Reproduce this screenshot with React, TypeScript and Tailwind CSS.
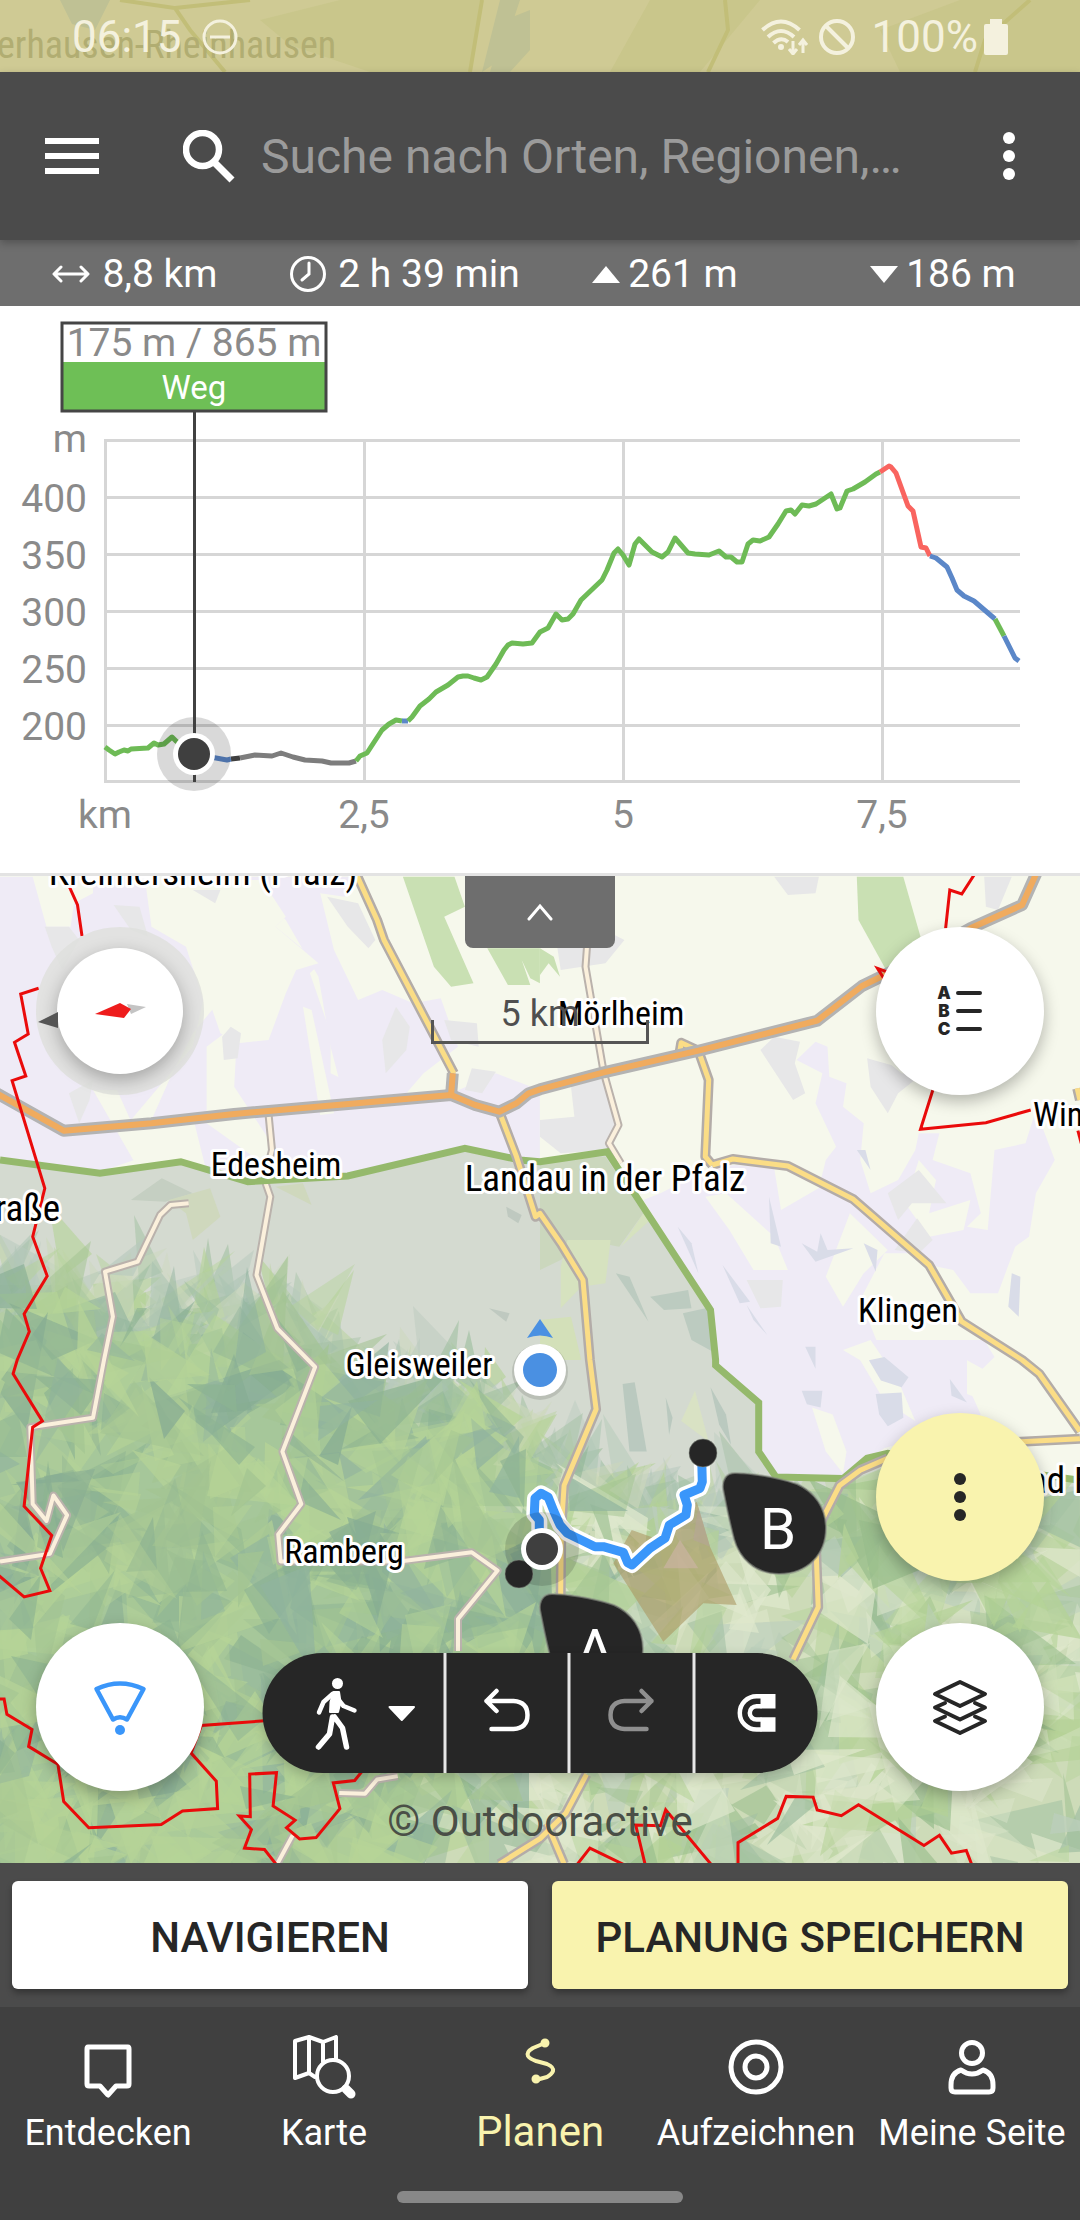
import React from "react";

/* ---------- Map geometry ---------- */

const sheet = (ox: number, oy: number, kx: number, ky: number) => (pts: string) =>
  pts
    .trim()
    .split(/\s+/)
    .map((p) => {
      const [x, y] = p.split(",").map(Number);
      return `${(ox + x / kx).toFixed(1)},${(oy + y / ky).toFixed(1)}`;
    })
    .join(" ");

const NW = sheet(0, 860, 2.904, 3);
const NE = sheet(540, 860, 2.904, 3);
const SW = sheet(0, 1340, 2.904, 2.958);
const SE = sheet(540, 1340, 2.904, 2.958);
const DETAIL = sheet(480, 1440, 3, 3);

const lavender = [
  NW("0,50 95,50 135,200 205,200 215,130 270,100 270,50 420,50 450,170 560,110 700,60 760,50 830,170 800,200 930,310 900,340 960,520 960,640 1060,690 1000,760 560,770 560,600 680,620 700,550 780,540 840,440 880,440 950,720 1310,700 1400,660 1440,640 1568,690 1568,905 1350,865 1010,948 720,965 600,935 560,770 500,780 400,790 340,780 390,900 290,935 0,895"),
  NW("700,50 1040,50 1000,110 930,100 970,270 1040,420 1110,390 1200,430 1280,415 1330,560 1230,640 1180,700 1000,720 960,560 925,350 830,180"),
  NE("745,600 800,545 835,560 840,650 890,670 880,740 940,790 930,900 960,1000 1040,960 1090,870 1100,820 1160,820 1140,900 1250,940 1280,1060 1240,1100 1300,1110 1320,870 1410,850 1440,750 1495,900 1440,1000 1420,1130 1380,1160 1330,1300 1250,1300 1200,1230 1130,1215 900,1020 830,1100 770,1150 830,900 860,860 800,730 820,640"),
  NE("350,1000 500,920 570,915 680,925 700,1050 850,960 920,1030 1080,1180 1000,1180 930,1320 1000,1500 510,1500 495,1340 300,1020"),
  SE("500,0 1290,0 1320,50 1240,130 1280,220 1190,260 1000,320 880,400 690,400 640,330 640,180 515,70"),
];

const sand = [
  NW("420,50 640,50 600,200 690,260 640,420 560,520 500,640 440,780 380,780 560,560 590,420 540,260 440,200"),
  NW("640,60 760,60 830,170 800,200 925,310 860,330 830,400 780,540 690,550 640,520 600,400 560,260"),
  NW("270,690 340,690 430,900 390,905"),
  NW("600,560 690,490 680,680 820,900 790,930 600,790"),
  NW("880,440 905,450 970,760 930,765"),
  NE("540,1000 680,1130 720,1230 620,1230 550,1110 480,1010"),
  NE("900,1060 1010,1170 940,1240 880,1340 830,1250"),
  NE("1100,900 1150,960 1130,1060 1250,1020 1230,1110 1130,1130 1060,1030"),
  SE("880,30 960,0 1040,120 1090,240 1000,180 930,60"),
  SE("790,200 850,220 890,330 880,395 830,330"),
  SE("1240,60 1330,110 1340,200 1240,160"),
];

const builtUp = [
  NW("130,200 200,200 230,240 180,330 150,260"),
  NW("330,135 405,140 430,230 380,210"),
  NW("950,110 1040,130 1090,240 1070,265 1010,200"),
  NW("670,500 700,520 690,595 650,600 645,530"),
  NW("1150,440 1190,500 1180,570 1120,640 1110,540"),
  NW("1290,480 1385,490 1390,560 1310,540"),
  NW("1370,625 1440,635 1400,700 1350,690"),
  NW("200,700 270,660 260,720 230,790"),
  NW("560,90 640,90 625,130"),
  NE("50,260 140,265 170,200 245,240 190,310 60,330"),
  NE("90,680 190,640 230,800 200,870 60,880 0,830 0,780 100,770"),
  NE("640,570 680,530 755,545 740,610 770,700 735,720"),
  NE("950,595 1020,615 1050,640 1100,650 1040,700 1010,760 960,680"),
  NE("680,50 810,50 800,100 720,105"),
  NE("1290,50 1370,50 1330,150 1295,140"),
  NE("1010,1000 1100,930 1180,1030 1080,1030 1040,1080"),
  NE("1095,1075 1140,1140 1100,1180 1030,1170"),
  NE("600,1260 705,1260 700,1340 640,1345"),
];

const meadow = [
  NW("1170,50 1320,50 1350,140 1290,170 1375,370 1310,380 1260,320"),
  NW("1415,265 1568,265 1568,370 1540,355 1515,300 1540,375 1475,375"),
  NE("0,265 40,290 58,350 25,310 0,345"),
  NE("920,50 1055,50 1105,230 1050,340 1005,330 925,180"),
];

const slate = [
  NE("530,1215 610,1325 580,1330"),
  NE("600,1335 660,1425 620,1380"),
  NE("665,1010 700,1160 670,1150"),
  NE("760,1150 805,1175 815,1120 835,1170 910,1165 800,1205"),
  NE("940,1150 980,1170 975,1235"),
  NE("1370,1240 1395,1250 1390,1370 1360,1340"),
  NE("920,870 945,870 960,930"),
  NE("400,1100 440,1150 460,1240"),
  SE("955,60 1000,50 1070,110 1050,140 990,120"),
  SE("975,160 1050,155 1055,230 1010,255 985,220"),
  SE("1190,115 1240,185 1195,165"),
  SE("770,20 800,20 800,85"),
  SE("760,150 820,150 815,200 775,190"),
];

const parkArea =
  NW("0,900 290,940 525,905 720,965 1010,948 1350,865 1510,900 1568,905") +
  " " +
  NE("0,905 195,875 495,1350 510,1500") +
  " " +
  SE("510,75 635,185 635,330 685,405 880,410 950,350 1010,335 1568,415") +
  " 1080,1863 0,1863";

const parkBorder =
  NW("0,900 290,940 525,905 720,965 1010,948 1350,865 1510,900 1568,905") +
  " " +
  NE("0,905 195,875 495,1350 510,1500") +
  " " +
  SE("510,75 635,185 635,330 685,405 880,410 950,350 1010,335 1568,415");

const parkPatches = [
  { pts: NE("0,900 190,890 300,1060 230,1160 130,1140 60,1200 0,1230"), fill: "#cbd7bd" },
  { pts: NE("80,1140 205,1140 190,1270 120,1280 60,1345 60,1220"), fill: "#d6e2bf" },
  { pts: NE("235,1160 300,1060 320,1080"), fill: "#d6e2bf" },
  { pts: NE("0,1380 90,1370 120,1500 0,1500"), fill: "#d3e0b9" },
  { pts: NE("220,1240 260,1250 315,1385"), fill: "#bccbc0" },
  { pts: NE("320,1310 430,1290 440,1345 360,1350"), fill: "#bccbc0" },
  { pts: NE("415,1360 500,1340 510,1480 440,1440"), fill: "#bccbc0" },
  { pts: NW("380,1020 470,955 560,1000 480,1025"), fill: "#c5cfc2" },
  { pts: NW("490,1020 610,985 640,1070 560,1140 540,1060"), fill: "#cfd8bd" },
  { pts: NW("800,980 880,970 905,1035"), fill: "#cfd8bd" },
  { pts: NW("1470,1040 1515,1065 1505,1090 1475,1070"), fill: "#bfc9c0" },
  { pts: NW("1420,1345 1480,1360 1470,1385"), fill: "#bfc9c0" },
  { pts: SE("240,130 275,125 310,330 260,330"), fill: "#bac9bf" },
  { pts: SE("365,170 385,230 375,280"), fill: "#bac9bf" },
  { pts: SE("410,240 450,150 490,300"), fill: "#d9e2c4" },
  { pts: SE("495,140 540,220 555,310 520,250"), fill: "#bac9bf" },
];

const forestEdge = [
  [0, 1285], [60, 1285], [110, 1315], [170, 1305], [240, 1325], [300, 1325], [350, 1375],
  [400, 1385], [450, 1390], [500, 1415], [535, 1460], [590, 1485], [650, 1505], [710, 1515],
  [760, 1495], [830, 1488], [900, 1475], [960, 1490], [1080, 1500],
];
const forestArea = forestEdge.map((p) => p.join(",")).join(" ") + " 1080,1863 0,1863";

// Height of the woodland's northern edge at a given easting.
const edgeAt = (x: number) => {
  for (let i = 1; i < forestEdge.length; i++) {
    const [x0, y0] = forestEdge[i - 1];
    const [x1, y1] = forestEdge[i];
    if (x <= x1) return y0 + ((y1 - y0) * (x - x0)) / (x1 - x0);
  }
  return 1500;
};

type Shard = { pts: string; fill: string; o: number };

// Woodland texture: overlapping triangular shards from a fixed seed.
const { hillside, fringe } = (() => {
  let seed = 20240615;
  const rnd = () => {
    seed = (seed * 1664525 + 1013904223) % 4294967296;
    return seed / 4294967296;
  };
  const triangle = (x: number, y: number, r: number, a: number) =>
    [0, 1.5 + rnd() * 1.2, 3.2 + rnd() * 1.4]
      .map((t, k) => {
        const len = r * (k === 0 ? 1.4 : 0.3 + rnd() * 0.6);
        return `${(x + Math.cos(a + t) * len).toFixed(0)},${(y + Math.sin(a + t) * len).toFixed(0)}`;
      })
      .join(" ");
  const west = ["#b6d497", "#b6d497", "#b6d497", "#8db392", "#90b39e", "#a3c492", "#86ac93"];
  const east = ["#dfe8cd", "#dfe8cd", "#dfe8cd", "#b4d296", "#b4d296", "#a0bfa2", "#bccfbc", "#98bd8c"];
  const hillside: Shard[] = [];
  for (let i = 0; i < 1250; i++) {
    const x = rnd() * 1100 - 10;
    const y = 1280 + rnd() * 600;
    if (y < edgeAt(x) + 6) continue;
    const colors = x + (y - 1500) * 0.4 > 540 + rnd() * 140 ? east : west;
    hillside.push({
      pts: triangle(x, y, 22 + rnd() * 42, rnd() * Math.PI * 2),
      fill: colors[Math.floor(rnd() * colors.length)],
      o: 0.35 + rnd() * 0.4,
    });
  }
  // Thin tree cover fades out towards the plain.
  const fringe: Shard[] = [];
  const pale = ["#a9c3b0", "#b7c9bd", "#b4d296", "#9fbfa0", "#ccd8bb"];
  for (let i = 0; i < 300; i++) {
    const x = rnd() * 760;
    const y = edgeAt(x) + 25 - rnd() * rnd() * 75;
    fringe.push({
      pts: triangle(x, y, 16 + rnd() * 30, -2.3 + rnd() * 2),
      fill: pale[Math.floor(rnd() * pale.length)],
      o: 0.35 + rnd() * 0.3,
    });
  }
  return { hillside, fringe };
})();

const lightRoads = [
  NW("780,765 790,870 768,960 785,1010 745,1245 805,1405 895,1500") + " " + SW("915,80 820,330 875,485 808,575 815,655 1160,655 1370,628 1445,682 1330,825 1330,920"),
  NW("548,1030 495,1035 465,1065 400,1205 305,1235 328,1370 302,1500") + " " + SW("270,230 88,258 95,485 135,535 155,460 195,518 145,632 0,655"),
  NE("138,50 138,240 132,320 185,637 228,795 200,850 235,910"),
  SW("985,1340 1060,1342 1095,1300 1155,1290"),
  SW("850,1465 805,1550"),
];

const yellowRoads = [
  NW("1025,20 1095,180 1115,240 1318,640"),
  NW("1450,755 1500,890 1555,1070") + " " + NE("0,1060 60,1150 125,1260 145,1500") + " " + SE("163,205 70,430 62,560 60,750 90,900"),
  NE("405,580 410,548 460,572 490,660 480,890 500,915"),
  NE("500,915 560,897 720,918 910,1018 1130,1215 1225,1385 1400,1500") + " " + SE("1450,100 1568,270"),
  SE("1380,302 1568,292"),
  SE("1010,350 930,385 870,430 800,570 808,790 735,945"),
  SE("135,1285 75,1400 0,1475") + " " + SW("1450,1550"),
  SE("20,1430 70,1550"),
  NE("1560,685 1568,720"),
];

const orangeRoads = [
  NW("-10,700 185,812 440,790 680,762 1310,705 1380,735 1450,755 1500,730 1535,700") + " " + NE("0,688 185,637 460,572 805,482 935,378 1030,330 1250,205 1400,135 1450,20"),
  NW("1315,640 1310,705"),
];

const redBorders = [
  NW("175,20 225,135 238,228"),
  NW("112,385 60,402 82,522 42,547 75,648 35,662 130,985 95,1130 137,1248 70,1362 85,1415 50,1500") + " " + SW("38,100 123,240 95,258 70,492 150,578 118,675 145,742 70,760 -5,695"),
  SW("-5,1062 12,1062 20,1107 93,1152 83,1202 168,1255 185,1365 258,1443 468,1433 530,1393 632,1386 628,1305 555,1222 585,1140 800,1124"),
  SW("1060,1265 1030,1303 968,1310 987,1386 918,1472 870,1476 832,1443 857,1420 793,1378 803,1280 725,1284 727,1410 695,1408 730,1448 710,1503 768,1507 805,1555"),
  SE("105,1555 145,1503 250,1555"),
  SE("306,1555 278,1435 350,1437 365,1390 500,1555"),
  SE("575,1555 575,1487 690,1415 715,1350 793,1352 805,1390 875,1407 925,1375 1115,1495 1160,1465 1195,1518 1238,1510 1255,1555"),
  NE("1270,30 1225,102 1190,90 1178,205"),
  NE("1020,340 980,325 998,355"),
  NE("1150,660 1105,808 1295,788 1425,750"),
  NE("1562,812 1572,850"),
];

const route = DETAIL(
  "178,300 178,240 163,222 165,175 183,160 205,172 222,215 240,255 262,280 345,320 370,320 430,337 443,368 456,375 510,325 555,295 568,255 618,225 622,195 612,165 660,145 667,125 665,60",
);

const towns = [
  { name: "Kreimersheim (Pfalz)", x: 203, y: 885 },
  { name: "Landau in der Pfalz", x: 605, y: 1191 },
];
const villages = [
  { name: "Mörlheim", x: 621, y: 1025 },
  { name: "Edesheim", x: 276, y: 1176 },
  { name: "Klingen", x: 908, y: 1322 },
  { name: "Gleisweiler", x: 419, y: 1376 },
  { name: "Ramberg", x: 344, y: 1563 },
];

const PIN =
  "M12 0C24 0 51 3 74 11C92 19 103 35 103 55C103 81 85 101 56 101C31 101 16 84 11 66C6 47 3 31 0 16C-1 7 3 0 12 0Z";

function Pin({ x, y, letter }: { x: number; y: number; letter: string }) {
  return (
    <g transform={`translate(${x} ${y})`}>
      <path d={PIN} fill="#262626" stroke="#8a8f86" strokeOpacity=".6" strokeWidth="2" />
      <text x="55" y="76" textAnchor="middle" className="fill-white text-[58px]">
        {letter}
      </text>
    </g>
  );
}

function Roads({ lines, casing, fill, outer, inner }: { lines: string[]; casing: string; fill: string; outer: number; inner: number }) {
  return (
    <g fill="none" strokeLinejoin="round">
      {lines.map((l, i) => (
        <polyline key={`c${i}`} points={l} stroke={casing} strokeWidth={outer} />
      ))}
      {lines.map((l, i) => (
        <polyline key={`f${i}`} points={l} stroke={fill} strokeWidth={inner} />
      ))}
    </g>
  );
}

function MapCanvas() {
  return (
    <svg viewBox="0 876 1080 987" className="block h-auto w-full" role="img" aria-label="Karte">
      <defs>
        <clipPath id="park">
          <polygon points={parkArea} />
        </clipPath>
      </defs>
      <rect x="0" y="876" width="1080" height="987" fill="#f6f8ec" />
      {lavender.map((p, i) => <polygon key={i} points={p} fill="#efebf6" />)}
      {sand.map((p, i) => <polygon key={i} points={p} fill="#f6f8ec" />)}
      {builtUp.map((p, i) => <polygon key={i} points={p} fill="#e7e7e8" />)}
      {meadow.map((p, i) => <polygon key={i} points={p} fill="#c9e0b3" />)}
      {slate.map((p, i) => <polygon key={i} points={p} fill="#d9dce8" />)}
      <polygon points={parkArea} fill="#d4dad0" />
      {parkPatches.map((p, i) => <polygon key={i} points={p.pts} fill={p.fill} />)}
      <g clipPath="url(#park)">
        <polygon points={forestArea} fill="#a6c79a" />
        <polygon points="560,1472 650,1505 710,1515 760,1495 830,1488 1080,1500 1080,1863 420,1863 540,1700" fill="#cddbb8" />
        {fringe.map((s, i) => <polygon key={i} points={s.pts} fill={s.fill} opacity={s.o} />)}
        {hillside.map((s, i) => <polygon key={i} points={s.pts} fill={s.fill} opacity={s.o} />)}
      </g>
      <polygon points={DETAIL("650,185 690,320 770,495 670,490 550,605 400,370 455,270 540,300")} fill="#ab9763" opacity=".6" />
      <polygon points={DETAIL("550,385 600,300 655,385")} fill="#cbb3a2" opacity=".7" />
      <polygon points={DETAIL("655,200 690,320 640,300")} fill="#b5a597" opacity=".6" />

      <Roads lines={lightRoads} casing="#bab2ac" fill="#fbf0dc" outer={8} inner={4} />
      <polyline points={parkBorder} fill="none" stroke="#95b96c" strokeWidth="7" />
      <Roads lines={yellowRoads} casing="#b3aca8" fill="#fbdd86" outer={10} inner={5} />
      <Roads lines={orangeRoads} casing="#b3b3b3" fill="#f0ab5e" outer={12} inner={6} />
      <g fill="none" stroke="#ea0b0b" strokeWidth="3">
        {redBorders.map((p, i) => <polyline key={i} points={p} />)}
      </g>

      <g className="fill-black font-['Roboto_Condensed','Noto_Sans',sans-serif] text-[37px]" stroke="#fff" strokeWidth="6" strokeLinejoin="round" paintOrder="stroke">
        {towns.map((p) => (
          <text key={p.name} x={p.x} y={p.y} textAnchor="middle">{p.name}</text>
        ))}
        <text x="60" y="1221" textAnchor="end">Weinstraße</text>
        <text x="1065" y="1493" textAnchor="end">Bad</text>
        <text x="1074" y="1493">Bergzabern</text>
        <g className="text-[34px]">
          {villages.map((p) => (
            <text key={p.name} x={p.x} y={p.y} textAnchor="middle">{p.name}</text>
          ))}
          <text x="1033" y="1126">Winden</text>
        </g>
      </g>

      <g fill="none" strokeLinejoin="round">
        <polyline points={route} stroke="#fff" strokeWidth="16" />
        <polyline points={route} stroke="#3a96fa" strokeWidth="9" />
      </g>
      <circle cx="542" cy="1549" r="37" fill="#000" opacity=".14" />
      <circle cx="519" cy="1574" r="14" fill="#262626" stroke="#8a8f86" strokeOpacity=".5" />
      <circle cx="542" cy="1549" r="21" fill="#fff" />
      <circle cx="542" cy="1549" r="16" fill="#3f3f3f" />
      <circle cx="703" cy="1453" r="14" fill="#262626" stroke="#8a8f86" strokeOpacity=".5" />
      <Pin x={540} y={1594} letter="A" />
      <Pin x={723} y={1473} letter="B" />

      <circle cx="540" cy="1372" r="28" fill="#000" opacity=".12" />
      <circle cx="540" cy="1370" r="26" fill="#fff" />
      <circle cx="540" cy="1370" r="17" fill="#4a90e2" />
      <path d="M540 1319L553 1338Q540 1333 527 1338Z" fill="#4a90e2" />
    </svg>
  );
}

/* ---------- Elevation profile ---------- */

const GREEN = "#6ebb56";
const BLUE = "#5b87c8";

const profile = [
  { color: GREEN, pts: "105,747 109,750 115,754 119,752 124,750 128,751 131,749 148,748 154,743 158,745 164,744 172,737 176,741 194,754" },
  { color: BLUE, pts: "210,757 216,758 227,760 231,759" },
  { color: "#3f3f3f", pts: "231,759 240,758" },
  { color: "#7d7d7d", pts: "240,758 255,755 272,756 281,753 293,757 305,760 322,761 331,763 349,763 356,761" },
  { color: GREEN, pts: "356,761 360,756 367,753 382,730 389,724 396,720 402,721" },
  { color: BLUE, pts: "402,721 408,721" },
  { color: GREEN, pts: "408,721 412,717 420,706 429,699 436,692 448,685 458,677 463,676 468,676 474,678 481,680 487,677 496,664 504,650 508,645 512,643 523,644 532,643 540,632 548,628 556,614 562,620 568,619 573,614 581,600 602,580 607,570 614,553 618,549 623,555 629,565 635,544 639,539 652,552 662,557 668,552 675,538 688,553 695,554 709,555 719,551 726,557 731,557 737,562 742,562 748,544 753,540 760,541 769,537 778,524 786,511 791,510 795,514 802,505 809,506 816,504 831,494 837,509 840,508 847,491 853,489 865,482 876,474 880,472" },
  { color: "#f9645f", pts: "880,472 889,466 891,467 896,473 908,506 913,511 921,547 926,548 930,556" },
  { color: BLUE, pts: "930,556 936,558 947,567 952,578 957,590 964,596 974,601 995,619" },
  { color: GREEN, pts: "995,619 1004,636" },
  { color: BLUE, pts: "1004,636 1015,658 1019,661" },
];

const yTicks = [
  { label: "m", y: 440, base: 452 },
  { label: "400", y: 497, base: 512 },
  { label: "350", y: 554, base: 569 },
  { label: "300", y: 611, base: 626 },
  { label: "250", y: 668, base: 683 },
  { label: "200", y: 725, base: 740 },
];
const xTicks = [
  { label: "km", x: 105 },
  { label: "2,5", x: 364 },
  { label: "5", x: 623 },
  { label: "7,5", x: 882 },
];

function ElevationProfile() {
  return (
    <section className="bg-white">
      <svg viewBox="0 306 1080 567" className="block h-auto w-full" role="img" aria-label="Höhenprofil">
        <g stroke="#d6d6d6" strokeWidth="3">
          {yTicks.map((t) => <line key={t.label} x1="104" x2="1020" y1={t.y + 0.5} y2={t.y + 0.5} />)}
          <line x1="104" x2="1020" y1="781.5" y2="781.5" />
          {xTicks.map((t) => <line key={t.label} x1={t.x + 0.5} x2={t.x + 0.5} y1="440" y2="782" />)}
        </g>
        <g className="fill-[#8a8a8a] text-[39px]">
          {yTicks.map((t) => <text key={t.label} x="87" y={t.base} textAnchor="end">{t.label}</text>)}
          {xTicks.map((t) => <text key={t.label} x={t.x} y="828" textAnchor="middle">{t.label}</text>)}
        </g>
        <g fill="none" strokeWidth="5" strokeLinejoin="round">
          {profile.map((s, i) => <polyline key={i} points={s.pts} stroke={s.color} />)}
        </g>
        <circle cx="194" cy="754" r="37" fill="#000" opacity=".15" />
        <line x1="194.5" x2="194.5" y1="412" y2="782" stroke="#414141" strokeWidth="3" />
        <circle cx="194" cy="754" r="21" fill="#fff" />
        <circle cx="194" cy="754" r="16" fill="#3f3f3f" />
        <rect x="62" y="323" width="264" height="88" fill="#fff" />
        <rect x="62" y="362" width="264" height="48" fill="#6ebf56" />
        <rect x="62" y="323" width="264" height="88" fill="none" stroke="#454545" strokeWidth="3" />
        <text x="194" y="356" textAnchor="middle" className="fill-[#8a8a8a] text-[39px]">175 m / 865 m</text>
        <text x="194" y="399" textAnchor="middle" className="fill-white text-[33px]">Weg</text>
      </svg>
    </section>
  );
}

/* ---------- Bars ---------- */

function StatusBar() {
  return (
    <header className="relative flex h-[72px] items-center justify-between overflow-hidden bg-[#cfca94] px-[72px] pt-0.5 text-[44px] text-[#f4f1de]">
      <svg viewBox="0 0 1080 72" preserveAspectRatio="xMidYMid slice" className="absolute inset-0 h-full w-full" aria-hidden="true">
        <path d="M60 0H110L95 30L72 24ZM500 0H520L500 60L482 72ZM505 20L530 10V50L510 72H490Z" fill="#bfc194" />
        <path d="M260 20L340 0H480L470 72H370L290 45ZM650 0H760L700 72H610ZM880 30L960 0H1080V72H900Z" fill="#c9c68b" />
        <path d="M120 0L175 8L190 30L225 72M175 8L250 0M482 0L470 72M725 0L728 30L708 72M1030 0L985 40L975 72" fill="none" stroke="#c2be78" strokeWidth="4" />
        <text x="-3" y="58" className="fill-[#b1ad72] font-['Roboto_Condensed','Noto_Sans',sans-serif] text-[38px]">erhausen-Rheinhausen</text>
      </svg>
      <div className="relative flex items-center gap-5">
        <span>06:15</span>
        <svg width="36" height="36" viewBox="0 0 36 36" fill="none" stroke="currentColor" strokeWidth="3" aria-hidden="true">
          <circle cx="18" cy="18" r="16" />
          <path d="M8 18H28" />
        </svg>
      </div>
      <div className="relative flex items-center">
        <svg width="48" height="36" viewBox="0 0 48 36" fill="none" stroke="currentColor" strokeWidth="4" aria-hidden="true">
          <path d="M1.500 11Q20 -6 38.500 11M7 18Q20 6 33 18M12.500 24Q20 17 27 23" />
          <circle cx="20" cy="28" r="3" fill="currentColor" stroke="none" />
          <path d="M32 22V34M28 30L32 35L36 30M42 34V22M38 26L42 21L46 26" strokeWidth="3" />
        </svg>
        <svg width="37" height="36" viewBox="0 0 37 36" fill="none" stroke="currentColor" strokeWidth="4" className="mr-4 ml-2.5" aria-hidden="true">
          <circle cx="18" cy="18" r="16" />
          <path d="M7 7L29 29" />
        </svg>
        <span>100%</span>
        <svg width="24" height="36" viewBox="0 0 24 36" fill="currentColor" className="ml-1.5" aria-hidden="true">
          <path d="M6 0H18V5H22Q24 5 24 7V34Q24 36 22 36H2Q0 36 0 34V7Q0 5 2 5H6Z" />
        </svg>
      </div>
    </header>
  );
}

function SearchBar() {
  return (
    <div className="relative flex h-[168px] items-center bg-[#4b4b4b] px-[45px] text-white shadow-[0_3px_8px_rgba(0,0,0,0.25)]">
      <button type="button" aria-label="Menü">
        <svg width="54" height="36" viewBox="0 0 54 36" fill="currentColor">
          <path d="M0 0H54V6H0ZM0 15H54V21H0ZM0 30H54V36H0Z" />
        </svg>
      </button>
      <label htmlFor="search" className="ml-[84px]">
        <span className="sr-only">Suche</span>
        <svg width="53" height="53" viewBox="0 0 53 53" fill="none" stroke="currentColor">
          <circle cx="19.500" cy="19.500" r="16.500" strokeWidth="6.500" />
          <path d="M32 33L49 50" strokeWidth="7" />
        </svg>
      </label>
      <input
        id="search"
        type="text"
        placeholder="Suche nach Orten, Regionen,…"
        className="ml-[25px] min-w-0 flex-1 bg-transparent pt-0.5 text-[48px] text-white outline-none placeholder:text-[#9b9b9b]"
      />
      <button type="button" aria-label="Mehr" className="px-5">
        <svg width="12" height="48" viewBox="0 0 12 48" fill="currentColor">
          <circle cx="6" cy="6" r="6" />
          <circle cx="6" cy="24" r="6" />
          <circle cx="6" cy="42" r="6" />
        </svg>
      </button>
    </div>
  );
}

function Stats() {
  return (
    <div className="grid h-[66px] grid-cols-4 items-center justify-items-center bg-[#6e6e6e] pt-0.5 text-[39px] text-white">
      <span className="flex items-center gap-3">
        <svg width="38" height="18" viewBox="0 0 38 18" fill="none" stroke="currentColor" strokeWidth="3" strokeLinecap="round" strokeLinejoin="round" aria-hidden="true">
          <path d="M3 9H35M9 2L2 9L9 16M29 2L36 9L29 16" />
        </svg>
        8,8 km
      </span>
      <span className="flex items-center gap-3">
        <svg width="36" height="36" viewBox="0 0 36 36" fill="none" stroke="currentColor" strokeWidth="3" strokeLinecap="round" aria-hidden="true">
          <circle cx="18" cy="18" r="16.500" />
          <path d="M19 7V18L12 24" />
        </svg>
        2 h 39 min
      </span>
      <span className="flex items-center gap-2 pr-5">
        <svg width="28" height="17" viewBox="0 0 28 17" fill="currentColor" aria-hidden="true">
          <path d="M14 0L28 17H0Z" />
        </svg>
        261 m
      </span>
      <span className="flex items-center gap-2 pr-1">
        <svg width="28" height="17" viewBox="0 0 28 17" fill="currentColor" aria-hidden="true">
          <path d="M0 0H28L14 17Z" />
        </svg>
        186 m
      </span>
    </div>
  );
}

/* ---------- Map controls ---------- */

function MapControls() {
  const round = "absolute h-[168px] w-[168px] rounded-full shadow-[0_6px_16px_rgba(0,0,0,0.28)]";
  return (
    <>
      <button type="button" aria-label="Profil einklappen" className="absolute top-0 left-1/2 flex h-[72px] w-[150px] -translate-x-1/2 items-center justify-center rounded-b-lg bg-[#6e6e6e]">
        <svg width="26" height="18" viewBox="0 0 26 18" fill="none" stroke="#fff" strokeWidth="3" strokeLinecap="round">
          <path d="M2 16L13 3L24 16" />
        </svg>
      </button>

      <div className="absolute top-[108px] left-1/2 flex w-[218px] -translate-x-1/2 flex-col items-center text-[36px] leading-[60px] text-[#4f4f4f]">
        <span className="-mb-6">5 km</span>
        <span className="h-6 w-full border-3 border-t-0 border-[#555]" />
      </div>

      <button type="button" aria-label="Kompass" className="absolute top-[51px] left-9 h-[168px] w-[168px] rounded-full bg-[#dfe0dc]/80">
        <span className="absolute inset-[21px] rounded-full bg-white shadow-[0_6px_18px_rgba(0,0,0,0.28)]" />
        <svg viewBox="0 0 168 168" className="relative h-full w-full">
          <path d="M2 95L22 85V101Z" fill="#555" />
          <path d="M91 77L110 80L95 87Z" fill="#c4c4c4" />
          <path d="M59 87L84 76L95 82L88 91Z" fill="#ee1c1c" />
        </svg>
      </button>

      <button type="button" aria-label="Legende" className={`${round} top-[51px] right-9 bg-white`}>
        <svg viewBox="0 0 168 168" className="h-full w-full">
          <g className="fill-[#262626] font-['Inter',sans-serif] text-[17px] font-black">
            <text x="68" y="72" textAnchor="middle">A</text>
            <text x="68" y="90" textAnchor="middle">B</text>
            <text x="68" y="108" textAnchor="middle">C</text>
          </g>
          <path d="M82 66H104M82 84H104M82 102H104" stroke="#262626" strokeWidth="4" strokeLinecap="round" />
        </svg>
      </button>

      <button type="button" aria-label="Weitere Optionen" className={`${round} right-9 bottom-[282px] bg-[#f9f3ae]`}>
        <svg viewBox="0 0 168 168" className="h-full w-full" fill="#262626">
          <circle cx="84" cy="66" r="6" />
          <circle cx="84" cy="84" r="6" />
          <circle cx="84" cy="102" r="6" />
        </svg>
      </button>

      <button type="button" aria-label="Kartenebenen" className={`${round} right-9 bottom-[72px] bg-white`}>
        <svg viewBox="0 0 168 168" className="h-full w-full" fill="none" stroke="#262626" strokeWidth="4" strokeLinejoin="round" strokeLinecap="round">
          <path d="M84 59L109 71L84 83L59 71Z" />
          <path d="M69 80L59 84.500L84 96.500L109 84.500L99 80" />
          <path d="M69 93.500L59 98L84 110L109 98L99 93.500" />
        </svg>
      </button>

      <button type="button" aria-label="Mein Standort" className={`${round} bottom-[72px] left-9 bg-white`}>
        <svg viewBox="0 0 168 168" className="h-full w-full">
          <path d="M60.500 66Q84 55 107.500 66L91 96.500Q84 92 77 96.500Z" fill="none" stroke="#3a96fa" strokeWidth="4.500" strokeLinejoin="round" />
          <circle cx="84" cy="107" r="5" fill="#3a96fa" />
        </svg>
      </button>

      <div className="absolute bottom-[90px] left-1/2 flex h-[120px] -translate-x-1/2 divide-x-3 divide-[#e6e6e6] overflow-hidden rounded-full bg-[#262626] text-white shadow-[0_4px_12px_rgba(0,0,0,0.2)]">
        <button type="button" aria-label="Wandern" className="w-[184px]">
          <svg viewBox="0 0 181 120" className="h-full w-[181px]" fill="currentColor" stroke="currentColor" strokeLinecap="round" strokeLinejoin="round">
            <circle cx="75" cy="30.500" r="5.500" stroke="none" />
            <path d="M71 39H76.500L78 49L75.500 59H67.500L68 49Z" strokeWidth="2" />
            <path d="M70 41L61 49L56.500 59.500M77 48L81 53L92 57.500" fill="none" strokeWidth="4.500" />
            <path d="M70 64L67 81L56 94M72 64L80 75L84 94" fill="none" strokeWidth="5.500" />
            <path d="M127 54H151.500L139.300 67Z" strokeWidth="2" />
          </svg>
        </button>
        <button type="button" aria-label="Rückgängig" className="w-[124px]">
          <svg viewBox="0 0 121 120" className="h-full w-[121px]" fill="none" stroke="currentColor" strokeWidth="4.500" strokeLinecap="round" strokeLinejoin="round">
            <path d="M50 38L40 48L50 58M40 48H67Q81 49 81 62Q81 75 67 76H45" />
          </svg>
        </button>
        <button type="button" aria-label="Wiederholen" className="w-[125px] text-[#8f8f8f]">
          <svg viewBox="0 0 121 120" className="h-full w-[121px]" fill="none" stroke="currentColor" strokeWidth="4.500" strokeLinecap="round" strokeLinejoin="round">
            <path d="M71 38L81 48L71 58M81 48H54Q40 49 40 62Q40 75 54 76H76" />
          </svg>
        </button>
        <button type="button" aria-label="Einrasten" className="w-[122px]">
          <svg viewBox="0 0 122 120" className="h-full w-full">
            <path d="M66 43.200H61A16.700 16.700 0 0 0 61 76.600H66M66 53.200H61A6.700 6.700 0 0 0 61 66.600H66" fill="none" stroke="currentColor" strokeWidth="4.500" />
            <path d="M65 41H80V55.500H65ZM65 64.300H80V78.800H65Z" fill="currentColor" />
          </svg>
        </button>
      </div>

      <p className="absolute bottom-4 left-1/2 -translate-x-1/2 text-[42px] leading-[50px] whitespace-nowrap text-[#4a4f47]">© Outdooractive</p>
    </>
  );
}

/* ---------- Bottom navigation ---------- */

const tabs: { label: string; active?: boolean; icon: React.ReactNode }[] = [
  {
    label: "Entdecken",
    icon: <path d="M12 12H52Q53 12 53 14V49Q53 51 51 51H40L32 60L24 51H13Q11 51 11 49V14Q11 12 12 12Z" />,
  },
  {
    label: "Karte",
    icon: (
      <>
        <path d="M23 42L17 38L3 43V6L17 2L31 7L44 2V25M17 2V38M31 7V27" strokeWidth="4" />
        <circle cx="41" cy="41" r="16" strokeWidth="4" />
        <path d="M54 54L59 59" strokeWidth="9" />
      </>
    ),
  },
  {
    label: "Planen",
    active: true,
    icon: (
      <>
        <path d="M37 8L25 13Q18 17 20 21Q22 24 28 26L39 29Q46 32 45 36Q44 39 39 42L28 45" strokeWidth="4" />
        <circle cx="37" cy="8" r="2.500" fill="currentColor" strokeWidth="4" />
        <circle cx="28" cy="44" r="2.500" fill="currentColor" strokeWidth="4" />
      </>
    ),
  },
  {
    label: "Aufzeichnen",
    icon: (
      <>
        <circle cx="32" cy="32" r="25" />
        <circle cx="32" cy="32" r="11" />
      </>
    ),
  },
  {
    label: "Meine Seite",
    icon: (
      <>
        <circle cx="32" cy="18" r="10.500" />
        <path d="M21 35Q32 43 43 35Q53 38 53 50V53Q53 57 49 57H15Q11 57 11 53V50Q11 38 21 35Z" />
      </>
    ),
  },
];

function BottomNav() {
  return (
    <nav className="bg-[#404040] pt-7 pb-[17px]">
      <ul className="grid grid-cols-5">
        {tabs.map((t) => (
          <li key={t.label}>
            <a href="#" aria-current={t.active ? "page" : undefined} className={t.active ? "flex flex-col items-center gap-3 text-[42px] leading-[42px] text-[#f9f3ae]" : "flex flex-col items-center gap-3 text-[36px] leading-[44px] text-white"}>
              <svg width="64" height="64" viewBox="0 0 64 64" fill="none" stroke="currentColor" strokeWidth="5" strokeLinecap="round" strokeLinejoin="round" aria-hidden="true">
                {t.icon}
              </svg>
              <span className="whitespace-nowrap">{t.label}</span>
            </a>
          </li>
        ))}
      </ul>
      <div className="mx-auto mt-9 h-3 w-[286px] rounded-full bg-[#888]" />
    </nav>
  );
}

export default function App() {
  const action = "h-[108px] rounded-md pt-1 whitespace-nowrap shadow-[0_4px_6px_rgba(0,0,0,0.3)]";
  return (
    <div className="flex w-full flex-col bg-[#404040] font-['Roboto',sans-serif]">
      <StatusBar />
      <SearchBar />
      <Stats />
      <ElevationProfile />
      <main className="relative overflow-hidden border-t-3 border-[#e3e3e3]">
        <MapCanvas />
        <MapControls />
      </main>
      <div className="grid grid-cols-2 gap-6 bg-[#4b4b4b] px-3 py-[18px] text-[42px] font-medium text-[#262626]">
        <button type="button" className={`${action} bg-white`}>NAVIGIEREN</button>
        <button type="button" className={`${action} bg-[#f9f3ae]`}>PLANUNG SPEICHERN</button>
      </div>
      <BottomNav />
    </div>
  );
}
